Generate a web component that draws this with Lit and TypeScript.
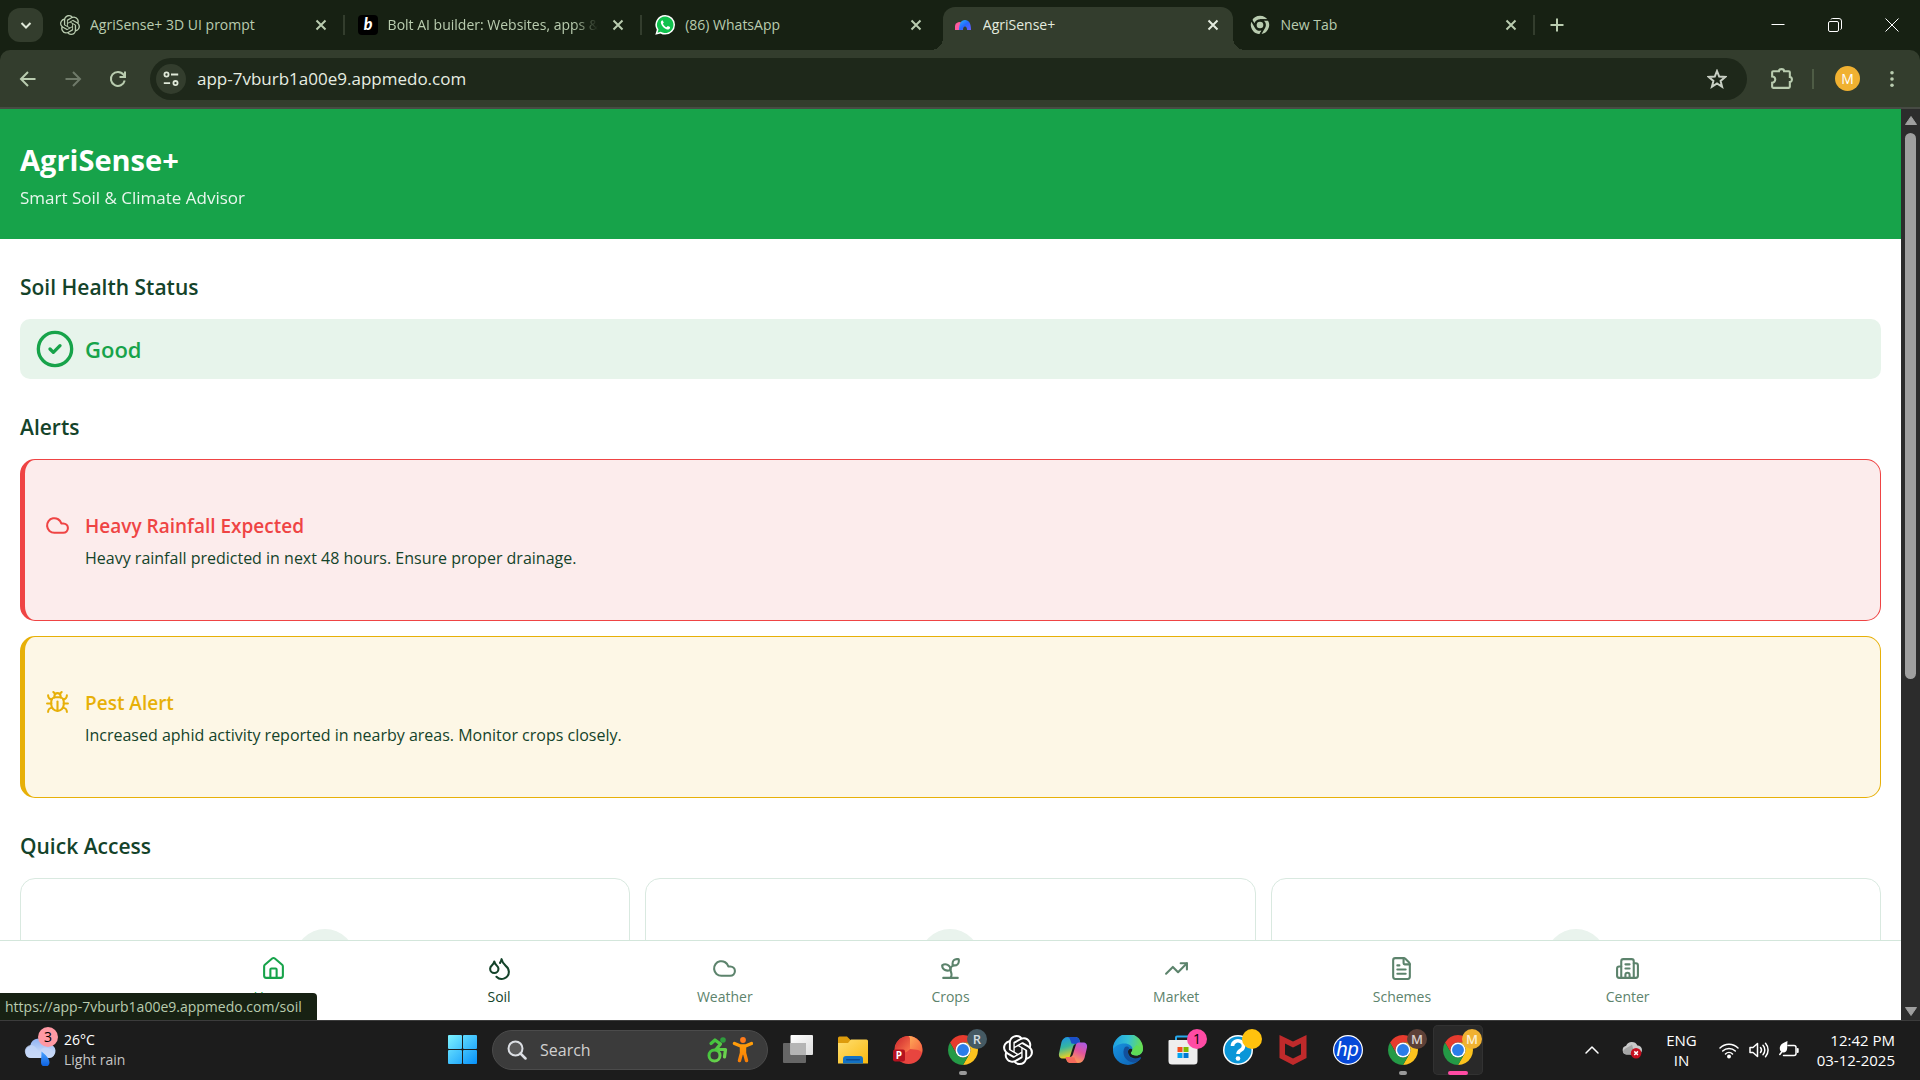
import { LitElement, html, css, svg, nothing } from "lit";
import type { TemplateResult } from "lit";
import { customElement } from "lit/decorators.js";
import { classMap } from "lit/directives/class-map.js";

type Art = TemplateResult;

/* ---------- line icons used inside the web page ---------- */

const line = (paths: string[], extra: unknown = nothing) => html`
  <svg class="line" viewBox="0 0 24 24" aria-hidden="true">
    ${paths.map((d) => svg`<path d=${d}></path>`)}${extra}
  </svg>`;

const cloud = line(["M17.5 19H9a7 7 0 1 1 6.71-9h1.79a4.5 4.5 0 1 1 0 9Z"]);
const circleCheck = line(["m9 12 2 2 4-4"], svg`<circle cx="12" cy="12" r="10"></circle>`);
const bug = line([
  "M12 20v-9",
  "M14 7a4 4 0 0 1 4 4v3a6 6 0 0 1-12 0v-3a4 4 0 0 1 4-4z",
  "M14.12 3.88 16 2",
  "M21 21a4 4 0 0 0-3.81-4",
  "M21 5a4 4 0 0 1-3.55 3.97",
  "M22 13h-4",
  "M3 21a4 4 0 0 1 3.81-4",
  "M3 5a4 4 0 0 0 3.55 3.97",
  "M6 13H2",
  "m8 2 1.88 1.88",
  "M9 7.13V6a3 3 0 1 1 6 0v1.13",
]);
const house = line([
  "M15 21v-8a1 1 0 0 0-1-1h-4a1 1 0 0 0-1 1v8",
  "M3 10a2 2 0 0 1 .709-1.528l7-5.999a2 2 0 0 1 2.582 0l7 5.999A2 2 0 0 1 21 10v9a2 2 0 0 1-2 2H5a2 2 0 0 1-2-2z",
]);
const droplets = line([
  "M7 16.3c2.2 0 4-1.83 4-4.05 0-1.16-.57-2.26-1.71-3.19S7.29 6.75 7 5.3c-.29 1.45-1.14 2.84-2.29 3.76S3 11.1 3 12.25c0 2.22 1.8 4.05 4 4.05z",
  "M12.56 6.6A10.97 10.97 0 0 0 14 3.02c.5 2.5 2 4.9 4 6.5s3 3.5 3 5.5a6.98 6.98 0 0 1-11.91 4.97",
]);
const sprout = line([
  "M14 9.536V7a4 4 0 0 1 4-4h1.5a.5.5 0 0 1 .5.5V5a4 4 0 0 1-4 4 4 4 0 0 0-4 4c0 2 1 3 1 5a5 5 0 0 1-1 3",
  "M4 9a5 5 0 0 1 8 4 5 5 0 0 1-8-4",
  "M5 21h14",
]);
const trending = line(["M16 7h6v6", "m22 7-8.5 8.5-5-5L2 17"]);
const fileText = line([
  "M6 22a2 2 0 0 1-2-2V4a2 2 0 0 1 2-2h8a2.4 2.4 0 0 1 1.704.706l3.588 3.588A2.4 2.4 0 0 1 20 8v12a2 2 0 0 1-2 2z",
  "M14 2v5a1 1 0 0 0 1 1h5",
  "M10 9H8",
  "M16 13H8",
  "M16 17H8",
]);
const building = line([
  "M10 12h4",
  "M10 8h4",
  "M14 21v-3a2 2 0 0 0-4 0v3",
  "M6 10H4a2 2 0 0 0-2 2v7a2 2 0 0 0 2 2h16a2 2 0 0 0 2-2V9a2 2 0 0 0-2-2h-2",
  "M6 21V5a2 2 0 0 1 2-2h8a2 2 0 0 1 2 2v16",
]);

/* ---------- browser and desktop artwork ---------- */

const knot = html`<svg viewBox="0 0 24 24" aria-hidden="true"><path fill="currentColor" d="M22.2819 9.8211a5.9847 5.9847 0 0 0-.5157-4.9108 6.0462 6.0462 0 0 0-6.5098-2.9A6.0651 6.0651 0 0 0 4.9807 4.1818a5.9847 5.9847 0 0 0-3.9977 2.9 6.0462 6.0462 0 0 0 .7427 7.0966 5.98 5.98 0 0 0 .511 4.9107 6.051 6.051 0 0 0 6.5146 2.9001A5.9847 5.9847 0 0 0 13.2599 24a6.0557 6.0557 0 0 0 5.7718-4.2058 5.9894 5.9894 0 0 0 3.9977-2.9001 6.0557 6.0557 0 0 0-.7475-7.0729zm-9.022 12.6081a4.4755 4.4755 0 0 1-2.8764-1.0408l.1419-.0804 4.7783-2.7582a.7948.7948 0 0 0 .3927-.6813v-6.7369l2.02 1.1686a.071.071 0 0 1 .038.052v5.5826a4.504 4.504 0 0 1-4.4945 4.4944zm-9.6607-4.1254a4.4708 4.4708 0 0 1-.5346-3.0137l.142.0852 4.783 2.7582a.7712.7712 0 0 0 .7806 0l5.8428-3.3685v2.3324a.0804.0804 0 0 1-.0332.0615L9.74 19.9502a4.4992 4.4992 0 0 1-6.1408-1.6464zM2.3408 7.8956a4.485 4.485 0 0 1 2.3655-1.9728V11.6a.7664.7664 0 0 0 .3879.6765l5.8144 3.3543-2.0201 1.1685a.0757.0757 0 0 1-.071 0l-4.8303-2.7865A4.504 4.504 0 0 1 2.3408 7.872zm16.5963 3.8558L13.1038 8.364 15.1192 7.2a.0757.0757 0 0 1 .071 0l4.8303 2.7913a4.4944 4.4944 0 0 1-.6765 8.1042v-5.6772a.79.79 0 0 0-.407-.667zm2.0107-3.0231l-.142-.0852-4.7735-2.7818a.7759.7759 0 0 0-.7854 0L9.409 9.2297V6.8974a.0662.0662 0 0 1 .0284-.0615l4.8303-2.7866a4.4992 4.4992 0 0 1 6.6802 4.66zM8.3065 12.863l-2.02-1.1638a.0804.0804 0 0 1-.038-.0567V6.0742a4.4992 4.4992 0 0 1 7.3757-3.4537l-.142.0805L8.704 5.459a.7948.7948 0 0 0-.3927.6813zm1.0976-2.3654l2.602-1.4998 2.6069 1.4998v2.9994l-2.5974 1.4997-2.6067-1.4997Z"></path></svg>`;

const boltLogo = html`<svg viewBox="0 0 20 20" aria-hidden="true">
  <rect width="20" height="20" rx="4" fill="#000"></rect>
  <text x="10" y="15" text-anchor="middle" fill="#fff" font-family="Lato, sans-serif" font-size="16" font-weight="900" font-style="italic">b</text>
</svg>`;

const whatsapp = html`<svg viewBox="0 0 20 20" aria-hidden="true">
  <path d="M10.2 0a9.8 9.8 0 0 1 0 19.6c-1.700 0-3.300-.4-4.700-1.200L.3 19.800l1.500-5A9.800 9.800 0 0 1 10.200 0z" fill="#fff"></path>
  <path d="M10.200 1.500a8.300 8.300 0 1 1-4.500 15.300l-3.200.900 1-3.100A8.300 8.300 0 0 1 10.200 1.500z" fill="#10c14d"></path>
  <path d="M7.500 5.300c-1.500.3-2 1.700-1.500 3.200 1 2.900 3.100 5 6 5.900 1.400.4 2.600-.2 3-1.400l.1-.9-2.300-1.200-1.300 1.300c-1.700-.7-2.900-1.900-3.600-3.500l.9-1.100z" fill="#fff"></path>
</svg>`;

const medoLogo = html`<svg viewBox="0 0 20 20" aria-hidden="true">
  <defs><linearGradient id="medo" x1="0" y1="0" x2="1" y2="1"><stop offset="0" stop-color="#27b6ff"></stop><stop offset=".5" stop-color="#2668ff"></stop><stop offset="1" stop-color="#6a5cff"></stop></linearGradient></defs>
  <path d="M2 15v-4a4 4 0 0 1 7-2.500V15z" fill="#ff5a9d"></path>
  <path d="M6 15c0-6 2-10 6-10s6 3.500 6 10h-4c0-2-.6-3.500-2-3.500S10 13 10 15z" fill="url(#medo)"></path>
</svg>`;

const sectors = {
  top: "M24 12H44.780A24 24 0 0 0 3.220 12L13.610 30A12 12 0 0 1 24 12z",
  right: "M34.390 30L24 48A24 24 0 0 0 44.780 12H24A12 12 0 0 1 34.390 30z",
  left: "M13.610 30L3.220 12A24 24 0 0 0 24 48L34.390 30A12 12 0 0 1 13.610 30z",
};
const chromeMono = html`<svg viewBox="0 0 48 48" aria-hidden="true">
  <g fill="#b9ccaf" stroke="#172113" stroke-width="4"><path d=${sectors.top}></path><path d=${sectors.left}></path><path d=${sectors.right}></path></g>
  <circle cx="24" cy="24" r="8" fill="#b9ccaf"></circle>
</svg>`;
const chrome = html`<svg viewBox="0 0 48 48" aria-hidden="true">
  <path d=${sectors.top} fill="#e63b2e"></path><path d=${sectors.right} fill="#fcc31e"></path><path d=${sectors.left} fill="#249a46"></path>
  <circle cx="24" cy="24" r="12" fill="#fff"></circle><circle cx="24" cy="24" r="9.500" fill="#2b7de9"></circle>
</svg>`;

const cross = html`<svg class="glyph" viewBox="0 0 20 20" aria-hidden="true"><path d="M5.500 5.500l9 9M14.500 5.500l-9 9"></path></svg>`;
const back = html`<svg class="glyph" viewBox="0 0 20 20" aria-hidden="true"><path d="M17.500 10H3.500M10 3L3 10l7 7"></path></svg>`;
const forward = html`<svg class="glyph" viewBox="0 0 20 20" aria-hidden="true"><path d="M2.500 10h14M10 3l7 7-7 7"></path></svg>`;
const reload = html`<svg class="glyph" viewBox="0 0 20 20" aria-hidden="true"><path d="M16.700 11.500A7 7 0 1 1 15.500 5.700L17 7.500M17 2.500v5.500h-5.500"></path></svg>`;
const tune = html`<svg class="glyph" viewBox="0 0 20 20" aria-hidden="true"><circle cx="5" cy="5" r="2.300"></circle><path d="M10 5h8M2 14.500h7"></path><circle cx="15" cy="14.500" r="2.300"></circle></svg>`;
const star = html`<svg class="glyph" viewBox="0 0 20 20" aria-hidden="true"><path d="M10 2l2.200 5.600 6 .4-4.600 3.900 1.500 5.900L10 14.500l-5.100 3.300 1.500-5.900L1.800 8l6-.4z"></path></svg>`;
const puzzle = html`<svg class="glyph" viewBox="0 0 24 24" aria-hidden="true"><path d="M4 5h5.500a2.500 2 0 0 1 5 0H19a1 1 0 0 1 1 1v4.500a2 2.500 0 0 1 0 5V20a1 1 0 0 1-1 1H4a1 1 0 0 1-1-1v-4a3 3 0 0 0 0-6V6a1 1 0 0 1 1-1z"></path></svg>`;
const dots = html`<svg viewBox="0 0 20 20" aria-hidden="true"><g fill="#b9ccaf"><circle cx="10" cy="3" r="2"></circle><circle cx="10" cy="10" r="2"></circle><circle cx="10" cy="17" r="2"></circle></g></svg>`;
const plus = html`<svg class="glyph" viewBox="0 0 20 20" aria-hidden="true"><path d="M10 3.500v13M3.500 10h13"></path></svg>`;
const chevronDown = html`<svg class="glyph" viewBox="0 0 20 20" aria-hidden="true"><path d="M5.500 8l4.500 4.500L14.500 8"></path></svg>`;
const winMin = html`<svg class="thin" viewBox="0 0 20 20" aria-hidden="true"><path d="M3.500 9.500h13"></path></svg>`;
const winRestore = html`<svg class="thin" viewBox="0 0 20 20" aria-hidden="true"><rect x="3.500" y="6.500" width="10" height="10" rx="1.500"></rect><path d="M6 4.500a1.500 1.500 0 0 1 1.500-1H14A2.500 2.500 0 0 1 16.500 6v7a1.500 1.500 0 0 1-1 1.500"></path></svg>`;
const winClose = html`<svg class="thin" viewBox="0 0 20 20" aria-hidden="true"><path d="M3.500 3.500l13 13M16.500 3.500l-13 13"></path></svg>`;

const weatherArt = html`<svg viewBox="0 0 32 32" aria-hidden="true">
  <defs>
    <linearGradient id="cl" x1="0" y1="0" x2="0" y2="1"><stop offset="0" stop-color="#8fb2f2"></stop><stop offset="1" stop-color="#dbe7fb"></stop></linearGradient>
    <linearGradient id="dr" x1="0" y1="0" x2="0" y2="1"><stop offset="0" stop-color="#4aa3ff"></stop><stop offset="1" stop-color="#0b5fe0"></stop></linearGradient>
  </defs>
  <path d="M7 24a6 6 0 0 1-1-11.800A9.500 9.500 0 0 1 24 10a7 7 0 0 1 1 14z" fill="url(#cl)"></path>
  <path d="M1.500 20a6 6 0 0 1 11-5.500c2 1.500 3 4 3 5.500a7 7 0 0 1 5-6.500c6 0 10 4 10 6.500a6 5 0 0 1-5.500 4H7a6 5 0 0 1-5.500-4z" fill="#c3d6f8" opacity=".8"></path>
  <path d="M17.500 17.500c4 3 8 7 8 11a4 4 0 0 1-8.500 0c0-3 .5-7 .5-11z" fill="url(#dr)"></path>
</svg>`;

const windowsArt = html`<svg viewBox="0 0 29 29" aria-hidden="true">
  <defs><linearGradient id="win" gradientUnits="userSpaceOnUse" x1="0" y1="0" x2="29" y2="29"><stop offset="0" stop-color="#7df3ff"></stop><stop offset="1" stop-color="#0690fa"></stop></linearGradient></defs>
  <g fill="url(#win)"><rect width="14" height="14" rx="1"></rect><rect x="15" width="14" height="14" rx="1"></rect><rect y="15" width="14" height="14" rx="1"></rect><rect x="15" y="15" width="14" height="14" rx="1"></rect></g>
</svg>`;

const magnifier = html`<svg viewBox="0 0 20 20" fill="none" stroke="#dcdfe4" aria-hidden="true"><circle cx="8.500" cy="8.500" r="7" stroke-width="2" fill="#5a5a5a"></circle><path d="M13.500 13.500l5 5" stroke-width="2.500" stroke-linecap="round"></path></svg>`;

const peopleArt = html`<svg viewBox="0 0 46 26" aria-hidden="true">
  <defs>
    <linearGradient id="gr" x1="0" y1="0" x2="1" y2="1"><stop offset="0" stop-color="#3fc23b"></stop><stop offset="1" stop-color="#6fd44f"></stop></linearGradient>
    <linearGradient id="or" x1="0" y1="0" x2="0" y2="1"><stop offset="0" stop-color="#ff9d0a"></stop><stop offset="1" stop-color="#f97f05"></stop></linearGradient>
  </defs>
  <circle cx="16" cy="3" r="2.800" fill="#2f9c3d"></circle>
  <g fill="none" stroke="url(#gr)" stroke-linecap="round" stroke-linejoin="round">
    <path d="M4 6.500l4-3.500 5.500 4-4.500 5.500h9.500L17.500 20" stroke-width="3.200"></path>
    <circle cx="7.500" cy="18.500" r="5.500" stroke-width="3"></circle>
  </g>
  <circle cx="36" cy="3" r="2.900" fill="#ff7a1a"></circle>
  <path d="M27.500 6.500l6 2.500h5l6-2.500M36 10v6M34.500 10v6l-2 7.500M37.500 10v6l2 7.500" fill="none" stroke="url(#or)" stroke-width="3.400" stroke-linecap="round" stroke-linejoin="round"></path>
</svg>`;

const taskView = html`<svg viewBox="0 0 30 30" aria-hidden="true">
  <defs><linearGradient id="tv" x1="0" y1="0" x2="1" y2="1"><stop offset="0" stop-color="#fff"></stop><stop offset="1" stop-color="#dcdcdc"></stop></linearGradient></defs>
  <rect y="8" width="23" height="20" rx="1" fill="#666"></rect>
  <rect x="7.500" width="22.500" height="20" rx="1" fill="url(#tv)"></rect>
  <path d="M7.500 8H23v12H8.500a1 1 0 0 1-1-1z" fill="#b5b5b5"></path>
</svg>`;

const folder = html`<svg viewBox="0 0 30 30" aria-hidden="true">
  <defs><linearGradient id="fo" x1="0" y1="0" x2="1" y2="1"><stop offset="0" stop-color="#ffdf71"></stop><stop offset="1" stop-color="#f9b910"></stop></linearGradient></defs>
  <path d="M0 3a1.500 1.500 0 0 1 1.500-1.500H9L12.500 5H28v10H0z" fill="#dd9c0c"></path>
  <path d="M0 8h10l3-3.500h15.500A1.500 1.500 0 0 1 30 6v22.500H0z" fill="url(#fo)"></path>
  <path d="M5 28.500V24a3 3 0 0 1 3-3h14a3 3 0 0 1 3 3v4.500z" fill="#1372c4"></path>
  <rect x="8" y="24" width="14" height="1.500" rx=".7" fill="#0a4a94"></rect>
</svg>`;

const powerpoint = html`<svg viewBox="0 0 30 30" aria-hidden="true">
  <defs><linearGradient id="pp" x1="0" y1="0" x2="1" y2="1"><stop offset="0" stop-color="#c8232c"></stop><stop offset="1" stop-color="#ff7b4e"></stop></linearGradient>
  <linearGradient id="pq" x1="0" y1="0" x2="1" y2="1"><stop offset="0" stop-color="#ffb05a"></stop><stop offset="1" stop-color="#f4603f"></stop></linearGradient></defs>
  <circle cx="15.500" cy="15" r="14" fill="#e8453f"></circle>
  <path d="M15 1a14 14 0 0 1 14 17c-1.500-3-5-3.500-12-4V5c0-2-.5-3-2-4z" fill="url(#pq)"></path>
  <path d="M2 12A14 14 0 0 1 15 1c1.500 1 2 2 2 4v9c-4 5-9 4-15 5z" fill="url(#pp)"></path>
  <rect y="14.500" width="12" height="12" rx="2" fill="#b5121f"></rect>
  <text x="6" y="24" text-anchor="middle" fill="#fff" font-family="Open Sans, sans-serif" font-size="10" font-weight="700">P</text>
</svg>`;

const copilot = html`<svg viewBox="0 0 30 30" aria-hidden="true">
  <defs>
    <linearGradient id="c1" x1="0" y1="0" x2=".3" y2="1"><stop offset="0" stop-color="#1b8df0"></stop><stop offset=".5" stop-color="#35b6a0"></stop><stop offset="1" stop-color="#f5d21c"></stop></linearGradient>
    <linearGradient id="c2" x1="1" y1="0" x2=".5" y2="1"><stop offset="0" stop-color="#a35bf0"></stop><stop offset=".5" stop-color="#e2559c"></stop><stop offset="1" stop-color="#ffa04f"></stop></linearGradient>
  </defs>
  <path d="M10 2h8a4 4 0 0 1 3.500 3l1 4h-4c-2 0-3 1-3.500 3l-2.500 8c-.6 2-1.500 3.500-3.500 3.500H5c-3 0-4.500-2-4-5L3.500 7C4.500 4 6.500 2 10 2z" fill="url(#c1)"></path>
  <path d="M10 2h8a4 4 0 0 1 3.500 3l1 4h-5l-4-.5c-1-2.500-1-5-3.500-6.500z" fill="#1b4fc8"></path>
  <path d="M20 28h-8a4 4 0 0 1-3.500-3l-1-3h4c2 0 3-1 3.500-3l2.500-8c.6-2 1.500-3.500 3.500-3.500h4c3 0 4.500 2 4 5L26.500 23c-1 3-3 5-6.500 5z" fill="url(#c2)"></path>
  <path d="M20 28h-8a4 4 0 0 1-3.500-3l-1-3h5l4 .5c1 2.500 1 4 3.500 5.500z" fill="#f56a5c"></path>
</svg>`;

const edge = html`<svg viewBox="0 0 30 30" aria-hidden="true">
  <defs>
    <linearGradient id="e1" x1="0" y1=".3" x2="1" y2=".4"><stop offset="0" stop-color="#1c9de2"></stop><stop offset=".5" stop-color="#35c1d4"></stop><stop offset="1" stop-color="#6be04a"></stop></linearGradient>
    <linearGradient id="e2" x1="0" y1="0" x2="1" y2="1"><stop offset="0" stop-color="#1a9be6"></stop><stop offset="1" stop-color="#0c5cb0"></stop></linearGradient>
  </defs>
  <circle cx="15" cy="15" r="15" fill="url(#e2)"></circle>
  <path d="M0 13.500A15 15 0 0 1 30 14c0 4-3 6.500-7 6.500-3 0-5-1-5-2.500 0-1 1.500-1.500 1.500-4C19.500 11 16 8.500 11.500 8.500 6 8.500 1.500 11 0 15z" fill="url(#e1)"></path>
  <path d="M12 12c-4 6 0 14.500 8 15.500 3 .3 5.500-1 7.500-3.500 1-1.500 0-2-1-1.500-6 3-12 0-11.500-6 .1-2 1-3 1.500-3.500-1-1.500-3-2-4.500-1z" fill="#12509c"></path>
  <path d="M15 16c-.3 6 5.500 9 11.500 6.500 1.500-.6 2.500.3 1.700 1.500l1.800-4V14c0 4-3 6.500-7 6.500-3 0-5-1-5-2.500 0-1 1.500-1.500 1.500-3.500-.7-1-3.500-1.500-4.500 1.500z" fill="#1c1c1c"></path>
  <path d="M29.900 13.500c0 4.500-3 7-6.900 7-3 0-5-1-5-2.500 0-1 1.500-1.500 1.500-4l4-4z" fill="#5fdc56"></path>
</svg>`;

const store = html`<svg viewBox="0 0 30 30" aria-hidden="true">
  <path d="M8 8V2.500A1 1 0 0 1 9 1.500h11a1 1 0 0 1 1 1V8" fill="none" stroke="#27a9ec" stroke-width="2"></path>
  <path d="M.5 6a1 1 0 0 1 1-1h27a1 1 0 0 1 1 1v20a3.500 3.500 0 0 1-3.500 3.500H4A3.500 3.500 0 0 1 .5 26z" fill="#eee"></path>
  <path fill="#f25022" d="M9.500 12h5v5h-5z"></path><path fill="#7fba00" d="M15.500 12h5v5h-5z"></path><path fill="#00a4ef" d="M9.500 18h5v5h-5z"></path><path fill="#0078d4" d="M15.500 18h5v5h-5z"></path>
</svg>`;

const help = html`<svg viewBox="0 0 30 30" aria-hidden="true">
  <circle cx="15" cy="15" r="15" fill="#fff"></circle><circle cx="15" cy="15" r="13.500" fill="#0a96d8"></circle>
  <path d="M9.500 11a5.500 5 0 1 1 8.500 4c-2 1.300-3 2-3 4" fill="none" stroke="#fff" stroke-width="3.600"></path><circle cx="15" cy="23.500" r="2.300" fill="#fff"></circle>
</svg>`;

const shield = html`<svg viewBox="0 0 30 30" aria-hidden="true"><path d="M1.500 0L15 6.500 28.500 0v23L15 30 1.500 23zM7 8.500v11L15 23.500l8-4v-11L15 12.500z" fill="#c02a2b" fill-rule="evenodd"></path></svg>`;

const hp = html`<svg viewBox="0 0 30 30" aria-hidden="true"><circle cx="15" cy="15" r="15" fill="#fff"></circle><circle cx="15" cy="15" r="13.800" fill="#0648d8"></circle>
  <text x="14.500" y="20.500" text-anchor="middle" fill="#fff" font-family="Liberation Sans, sans-serif" font-size="20" font-style="italic">hp</text></svg>`;

const chevronUp = html`<svg class="tray-line" viewBox="0 0 20 20" aria-hidden="true"><path d="M4 13l6-6 6 6"></path></svg>`;
const oneDrive = html`<svg viewBox="0 0 22 20" aria-hidden="true"><path d="M5 15a5 5 0 0 1-.5-9.800A7 7 0 0 1 17 5a5 5 0 0 1 0 10z" fill="#c9c9c9"></path><path d="M1 12C2 8 8 7 11 4l3 11H5a4 4 0 0 1-4-3z" fill="#a5a5a5"></path>
  <circle cx="15.500" cy="13.500" r="5.800" fill="#c50f1f"></circle><path d="M13.500 11.500l4 4M17.500 11.500l-4 4" stroke="#fff" stroke-width="1.600"></path></svg>`;
const wifi = html`<svg class="tray-line" viewBox="0 0 20 20" aria-hidden="true"><path d="M1 8a12.500 12.500 0 0 1 18 0M3.700 11a9 9 0 0 1 12.600 0M6.500 14a5 5 0 0 1 7 0"></path><circle cx="10" cy="16.500" r="1.200" fill="#fff"></circle></svg>`;
const volume = html`<svg class="tray-line" viewBox="0 0 20 20" aria-hidden="true"><path d="M1 7.500h3l4.500-4v13l-4.500-4H1zM11.500 7.500a4 4 0 0 1 0 5M14 5.300a7 7 0 0 1 0 9.400M16.500 3.300a10 10 0 0 1 0 13.400"></path></svg>`;
const battery = html`<svg class="tray-line" viewBox="0 0 20 20" aria-hidden="true"><path d="M9 5.500h6a2 2 0 0 1 2 2v6a2 2 0 0 1-2 2H4.500"></path><path d="M18.700 9v3" stroke-width="2"></path><path d="M8.500 1C4 3 .5 4.500.8 9c.2 3 4 4.500 6.200 2.500C9 9.500 8 5 8.500 1z" fill="#fff" stroke="none"></path><path d="M.8 14.500L5 9" stroke-width="1.500"></path></svg>`;

/* ---------- data ---------- */

interface Tab { title: string; art: Art; active?: boolean; long?: boolean }
const tabs: Tab[] = [
  { title: "AgriSense+ 3D UI prompt", art: knot },
  { title: "Bolt AI builder: Websites, apps &", art: boltLogo, long: true },
  { title: "(86) WhatsApp", art: whatsapp },
  { title: "AgriSense+", art: medoLogo, active: true },
  { title: "New Tab", art: chromeMono },
];

const alerts = [
  { kind: "danger", art: cloud, title: "Heavy Rainfall Expected", text: "Heavy rainfall predicted in next 48 hours. Ensure proper drainage." },
  { kind: "warning", art: bug, title: "Pest Alert", text: "Increased aphid activity reported in nearby areas. Monitor crops closely." },
];

const links = [
  { label: "Home", path: "/", art: house, tone: "current" },
  { label: "Soil", path: "/soil", art: droplets, tone: "hovered" },
  { label: "Weather", path: "/weather", art: cloud, tone: "" },
  { label: "Crops", path: "/crops", art: sprout, tone: "" },
  { label: "Market", path: "/market", art: trending, tone: "" },
  { label: "Schemes", path: "/schemes", art: fileText, tone: "" },
  { label: "Center", path: "/center", art: building, tone: "" },
];

interface App { name: string; art: Art; badge?: string; tone?: string; running?: boolean; focused?: boolean }
const apps: App[] = [
  { name: "Task view", art: taskView },
  { name: "File Explorer", art: folder },
  { name: "PowerPoint", art: powerpoint },
  { name: "Chrome", art: chrome, badge: "R", tone: "slate", running: true },
  { name: "ChatGPT", art: knot },
  { name: "Copilot", art: copilot },
  { name: "Edge", art: edge },
  { name: "Store", art: store, badge: "1", tone: "pink" },
  { name: "Help", art: help, badge: "", tone: "yellow" },
  { name: "McAfee", art: shield },
  { name: "HP", art: hp },
  { name: "Chrome", art: chrome, badge: "M", tone: "brown", running: true },
  { name: "Chrome", art: chrome, badge: "M", tone: "amber", running: true, focused: true },
];

@customElement("app-root")
export class AppRoot extends LitElement {
  static styles = css`
    :host {
      display: flex;
      flex-direction: column;
      height: 100vh;
      overflow: hidden;
      font-family: "Open Sans", "Noto Sans", sans-serif;
      font-size: 16px;
      background: #172113;
    }
    *, *::before, *::after { box-sizing: border-box; }
    button, input { font: inherit; color: inherit; border: 0; background: none; padding: 0; margin: 0; }
    h1, h2, h3, p { margin: 0; }
    a { color: inherit; text-decoration: none; }
    svg { display: block; width: 100%; height: 100%; }
    .line { fill: none; stroke: currentColor; stroke-width: 2; stroke-linecap: round; stroke-linejoin: round; }
    .glyph { fill: none; stroke: currentColor; stroke-width: 2; }
    .thin { fill: none; stroke: #fff; stroke-width: 1; }
    .tray-line { fill: none; stroke: #fff; stroke-width: 1.5; stroke-linecap: round; stroke-linejoin: round; }
    .i18 { flex: none; width: 18px; height: 18px; }
    .i20 { flex: none; width: 20px; height: 20px; }
    .center { display: flex; align-items: center; justify-content: center; }

    /* tab strip */
    .strip { display: flex; flex: none; height: 50px; color: #b9ccaf; }
    .finder { flex: none; width: 35px; height: 34px; margin: 8px 4px 8px 8px; border-radius: 12px; background: #333d2d; color: #dfe8d8; }
    .tabs { flex: 0 1 1488px; min-width: 0; display: grid; grid-template-columns: repeat(5, 1fr); }
    .tab { position: relative; display: flex; align-items: center; gap: 10px; min-width: 0; padding: 0 14px 8px 13px; margin-top: 8px; font-size: 14px; line-height: 20px; }
    .tab.ruled::after { content: ""; position: absolute; right: 0; top: 7px; width: 2px; height: 20px; background: #333d2d; }
    .tab.active { color: #e4ebdf; }
    .tab.active::before { content: ""; position: absolute; inset: -1px 4px 0 3px; border-radius: 12px 12px 0 0; background: #333d2d; }
    .tab > * { position: relative; }
    .tab > .flare { position: absolute; bottom: 0; width: 12px; height: 12px; }
    .flare.l { left: -9px; background: radial-gradient(circle at 0 0, transparent 12px, #333d2d 12px); }
    .flare.r { right: -8px; background: radial-gradient(circle at 100% 0, transparent 12px, #333d2d 12px); }
    .tab-title { flex: 1; min-width: 0; text-align: left; white-space: nowrap; overflow: hidden; }
    .tab-title.long { mask-image: linear-gradient(90deg, #000 calc(100% - 24px), transparent); }
    .new-tab { flex: none; width: 44px; }
    .spacer { flex: 1; }
    .win { flex: none; width: 57px; padding-bottom: 1px; }

    /* toolbar */
    .toolbar { display: flex; align-items: center; flex: none; height: 59px; padding: 0 12px 0 10px; border-radius: 10px 10px 0 0; border-bottom: 2px solid #474b44; background: #333d2d; color: #b9ccaf; }
    .tool { flex: none; width: 36px; height: 36px; margin-right: 9px; }
    .tool.dim { color: #6f7a69; }
    .omnibox { display: flex; align-items: center; flex: 1; height: 42px; margin: 0 16px 0 5px; padding: 0 20px 0 6px; gap: 11px; border-radius: 21px; background: #1e281a; }
    .site { flex: none; width: 30px; height: 30px; border-radius: 15px; background: #333d2d; color: #dfe8d8; }
    .url { flex: 1; min-width: 0; color: #e7eee2; font-size: 17px; height: 30px; outline: 0; }
    .omnibox .star { color: #c8cfc4; }
    .rule { flex: none; width: 2px; height: 20px; margin: 0 21px 0 4px; background: #4e5c45; }
    .avatar { flex: none; width: 25px; height: 25px; margin-right: 16px; border-radius: 50%; background: #f0b131; color: #fff; font-size: 14px; line-height: 25px; text-align: center; }
    .more { flex: none; width: 32px; height: 32px; }

    /* web page */
    .viewport { position: relative; display: flex; flex: 1; min-height: 0; }
    .page { display: flex; flex-direction: column; flex: 1; min-width: 0; background: #fff; color: #14432a; }
    .scroll { flex: 1; min-height: 0; overflow: hidden; }
    .hero { padding: 31px 20px 29px; background: #17a34a; color: #fff; }
    .hero h1 { margin-bottom: 5px; font-size: 29px; line-height: 40px; font-weight: 700; }
    .hero p { font-size: 17px; line-height: 25px; opacity: .9; }
    .content { display: flex; flex-direction: column; gap: 30px; padding: 30px 20px; }
    .block { display: flex; flex-direction: column; gap: 15px; }
    .block h2 { padding-top: 1px; font-size: 21px; line-height: 34px; font-weight: 600; }
    .status { display: flex; align-items: center; gap: 10px; padding: 10px 15px; border-radius: 10px; background: #e7f4eb; color: #17a34a; font-size: 22px; line-height: 40px; font-weight: 600; }
    .i40 { flex: none; width: 40px; height: 40px; }
    .i25 { flex: none; width: 25px; height: 25px; }
    .alert { display: flex; gap: 15px; padding: 50px 20px; border: 1px solid; border-left-width: 5px; border-radius: 15px; }
    .alert.danger { background: #fcecec; color: #ef4444; }
    .alert.warning { background: #fdf7e6; color: #e7b008; }
    .alert .i25 { margin-top: 3px; }
    .alert h3 { margin-bottom: 5px; padding-top: 1px; font-size: 19px; line-height: 30px; font-weight: 600; }
    .alert p { color: #14432a; font-size: 16px; line-height: 24px; }
    .cards { display: grid; grid-template-columns: repeat(3, 1fr); gap: 15px; }
    .card { display: flex; justify-content: center; padding: 50px 20px; border: 1px solid #d9e9e0; border-radius: 15px; }
    .disc { width: 60px; height: 60px; border-radius: 50%; background: #e9f3ed; }
    .nav { flex: none; height: 80px; border-top: 1px solid #d3e6db; background: #fff; }
    .nav-row { display: grid; grid-template-columns: repeat(7, 1fr); max-width: 1600px; height: 100%; margin: 0 auto; padding: 2px 10px 0; }
    .nav-link { display: flex; flex-direction: column; align-items: center; justify-content: center; gap: 6px; color: #5c836c; font-size: 14px; line-height: 20px; font-weight: 500; }
    .nav-link.current { color: #17a34a; }
    .nav-link.hovered { color: #14432a; }
    .scrollbar { display: flex; flex-direction: column; align-items: center; flex: none; width: 19px; padding: 7px 0 4px; gap: 8px; background: #2c2c2c; }
    .scrollbar svg { flex: none; width: 12px; height: 9px; }
    .track { flex: 1; width: 11px; }
    .thumb { height: 63%; border-radius: 6px; background: #9f9f9f; }
    .bubble { position: absolute; left: 0; bottom: 0; height: 27px; padding: 0 15px 0 5px; border-radius: 0 4px 0 0; background: #172113; color: #b9ccaf; font-size: 14px; line-height: 27px; }

    /* taskbar */
    .taskbar { display: flex; align-items: center; flex: none; height: 60px; padding-bottom: 2px; border-top: 1px solid #3c3c3c; background: #1c1c1c; color: #fff; font-size: 15px; line-height: 20px; }
    .side { flex: 1; display: flex; align-items: center; min-width: 0; }
    .side.end { justify-content: flex-end; }
    .widget { display: flex; align-items: center; gap: 8px; padding-left: 24px; text-align: left; font-size: 14px; }
    .forecast { position: relative; width: 32px; height: 32px; }
    .widget .muted { color: #c5c5c5; }
    .dock { display: flex; align-items: center; gap: 5px; }
    .start { width: 50px; height: 50px; }
    .i29 { width: 29px; height: 29px; }
    .search { display: flex; align-items: center; gap: 13px; width: 276px; height: 40px; padding: 0 14px; border: 1px solid #4b4b4b; border-radius: 20px; background: #3b3b3b; }
    .search input { flex: 1; min-width: 0; font-size: 16px; outline: 0; }
    .search input::placeholder { color: #d0d0d0; opacity: 1; }
    .people { flex: none; width: 46px; height: 26px; }
    .app { position: relative; width: 50px; height: 50px; border-radius: 5px; }
    .app.focused { background: #292929; box-shadow: inset 0 0 0 1px #323232; }
    .i30 { width: 30px; height: 30px; }
    .badge { position: absolute; right: 1px; top: 4px; width: 20px; height: 20px; border-radius: 50%; font-size: 13px; line-height: 20px; text-align: center; font-weight: 600; }
    .badge.slate { background: #455a64; color: #d5dde0; }
    .badge.pink { background: #ff4ba4; color: #000; font-weight: 400; font-size: 14px; }
    .badge.yellow { background: #ffc20e; }
    .badge.brown { background: #5d4037; color: #d8cfcc; }
    .badge.amber { background: #f0b131; color: #fbeed0; }
    .forecast .badge { right: -2px; top: -7px; background: #ff99a4; color: #000; font-weight: 400; font-size: 14px; }
    .mark { position: absolute; left: 21px; bottom: 0; width: 8px; height: 4px; border-radius: 2px; background: #9a9a9a; }
    .focused .mark { left: 15px; width: 20px; background: #ff4ba4; }
    .tray { display: flex; align-items: center; gap: 10px; padding-right: 25px; }
    .tray button { display: flex; align-items: center; gap: 10px; }
    .tray .chev { margin-right: 10px; }
    .lang { margin: 0 12px 0 14px; text-align: center; }
    .lang span, .clock span { display: block; }
    .tray .clock { display: block; margin-left: 8px; text-align: right; }
  `;

  private renderTab(tab: Tab, index: number) {
    const ruled = index === 0 || index === 1 || index === 4;
    return html`<div class=${classMap({ tab: true, active: !!tab.active, ruled })}>
      ${tab.active ? html`<span class="flare l"></span><span class="flare r"></span>` : nothing}
      <span class="i20">${tab.art}</span>
      <button class=${classMap({ "tab-title": true, long: !!tab.long })}>${tab.title}</button>
      <button class="i20" aria-label="Close tab">${cross}</button>
    </div>`;
  }

  private renderApp(app: App) {
    return html`<button class=${classMap({ app: true, center: true, focused: !!app.focused })} aria-label=${app.name}>
      <span class="i30">${app.art}</span>
      ${app.badge !== undefined ? html`<span class="badge ${app.tone ?? ""}">${app.badge}</span>` : nothing}
      ${app.running ? html`<span class="mark"></span>` : nothing}
    </button>`;
  }

  render() {
    return html`
      <div class="strip">
        <button class="finder center" aria-label="Search tabs"><span class="i20">${chevronDown}</span></button>
        <div class="tabs">${tabs.map((t, i) => this.renderTab(t, i))}</div>
        <button class="new-tab center" aria-label="New tab"><span class="i20">${plus}</span></button>
        <div class="spacer"></div>
        <button class="win center" aria-label="Minimize"><span class="i20">${winMin}</span></button>
        <button class="win center" aria-label="Restore"><span class="i20">${winRestore}</span></button>
        <button class="win center" aria-label="Close"><span class="i20">${winClose}</span></button>
      </div>

      <div class="toolbar">
        <button class="tool center" aria-label="Back"><span class="i20">${back}</span></button>
        <button class="tool dim center" aria-label="Forward"><span class="i20">${forward}</span></button>
        <button class="tool center" aria-label="Reload"><span class="i20">${reload}</span></button>
        <div class="omnibox">
          <button class="site center" aria-label="Site information"><span class="i18">${tune}</span></button>
          <input class="url" type="text" aria-label="Address" value="app-7vburb1a00e9.appmedo.com" />
          <button class="i20 star" aria-label="Bookmark">${star}</button>
        </div>
        <button class="tool center" aria-label="Extensions"><span class="i25">${puzzle}</span></button>
        <span class="rule"></span>
        <button class="avatar" aria-label="Profile">M</button>
        <button class="more center" aria-label="Menu"><span class="i18">${dots}</span></button>
      </div>

      <div class="viewport">
        <div class="page">
          <div class="scroll">
            <header class="hero">
              <h1>AgriSense+</h1>
              <p>Smart Soil &amp; Climate Advisor</p>
            </header>
            <main class="content">
              <section class="block">
                <h2>Soil Health Status</h2>
                <div class="status"><span class="i40">${circleCheck}</span><span>Good</span></div>
              </section>
              <section class="block">
                <h2>Alerts</h2>
                ${alerts.map((a) => html`<article class="alert ${a.kind}">
                  <span class="i25">${a.art}</span>
                  <div><h3>${a.title}</h3><p>${a.text}</p></div>
                </article>`)}
              </section>
              <section class="block">
                <h2>Quick Access</h2>
                <div class="cards">${[0, 1, 2].map(() => html`<div class="card"><span class="disc"></span></div>`)}</div>
              </section>
            </main>
          </div>
          <nav class="nav">
            <div class="nav-row">
              ${links.map((l) => html`<a class="nav-link ${l.tone}" href=${l.path}><span class="i25">${l.art}</span><span>${l.label}</span></a>`)}
            </div>
          </nav>
        </div>
        <div class="scrollbar">
          <svg viewBox="0 0 12 9" aria-hidden="true"><path d="M6 0.500L11.500 8.500H.5z" fill="#9f9f9f" stroke="#9f9f9f" stroke-linejoin="round"></path></svg>
          <div class="track"><div class="thumb"></div></div>
          <svg viewBox="0 0 12 9" aria-hidden="true"><path d="M6 8.500L11.500.500H.5z" fill="#9f9f9f" stroke="#9f9f9f" stroke-linejoin="round"></path></svg>
        </div>
        <div class="bubble">https://app-7vburb1a00e9.appmedo.com/soil</div>
      </div>

      <div class="taskbar">
        <div class="side">
          <button class="widget">
            <span class="forecast">${weatherArt}<span class="badge">3</span></span>
            <span><span>26°C</span><br /><span class="muted">Light rain</span></span>
          </button>
        </div>
        <div class="dock">
          <button class="start center" aria-label="Start"><span class="i29">${windowsArt}</span></button>
          <label class="search">
            <span class="i20">${magnifier}</span>
            <input type="text" placeholder="Search" aria-label="Search" />
            <span class="people">${peopleArt}</span>
          </label>
          ${apps.map((a) => this.renderApp(a))}
        </div>
        <div class="side end">
          <div class="tray">
            <button class="chev" aria-label="Show hidden icons"><span class="i20">${chevronUp}</span></button>
            <button aria-label="OneDrive"><span class="i20">${oneDrive}</span></button>
            <div class="lang"><span>ENG</span><span>IN</span></div>
            <button aria-label="Quick settings"><span class="i20">${wifi}</span><span class="i20">${volume}</span><span class="i20">${battery}</span></button>
            <button class="clock"><span>12:42 PM</span><span>03-12-2025</span></button>
          </div>
        </div>
      </div>
    `;
  }
}
